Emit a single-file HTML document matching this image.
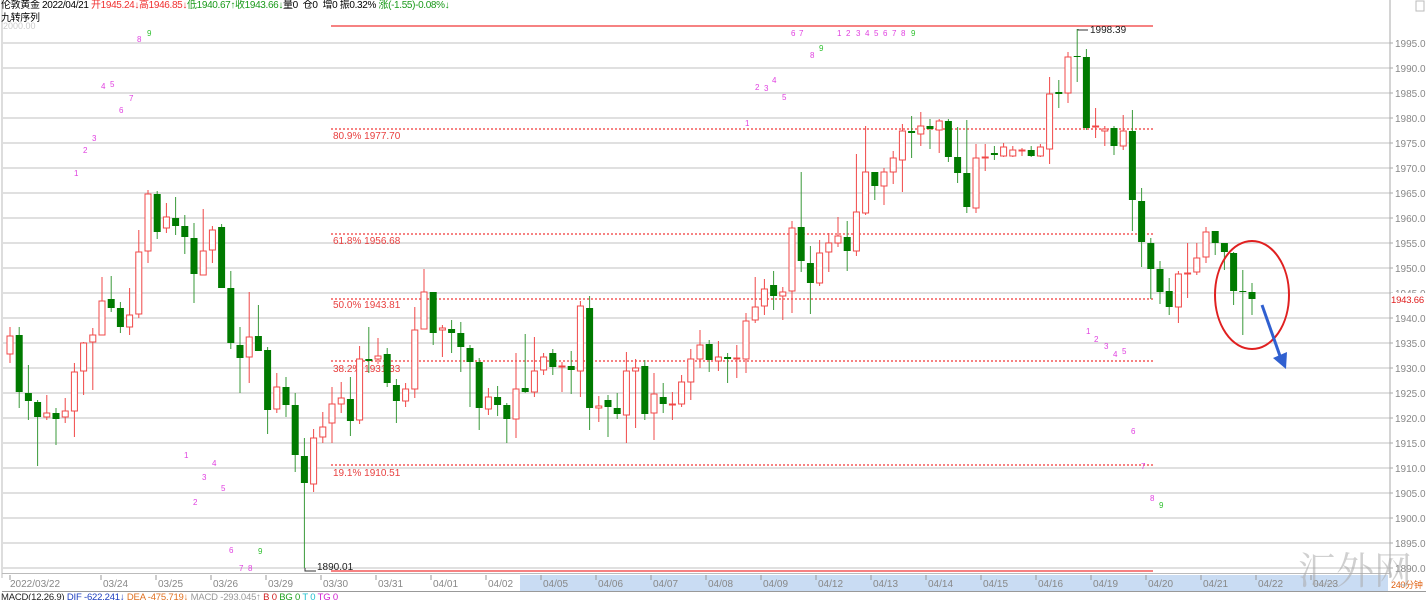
<!DOCTYPE html>
<html><head><meta charset="utf-8"><style>
body{margin:0;width:1426px;height:600px;overflow:hidden;background:#fff;font-family:"Liberation Sans","Noto Sans CJK SC",sans-serif}
svg{position:absolute;left:0;top:0}
.hd{position:absolute;left:1px;top:0;font-size:10px;letter-spacing:-0.35px;white-space:nowrap;color:#000;line-height:12.5px}
.r{color:#f03030}.g{color:#1a9a1a}
</style></head><body>
<svg width="1426" height="600" viewBox="0 0 1426 600" font-family="Liberation Sans, Noto Sans CJK SC, sans-serif">
<line x1="2" y1="0" x2="2" y2="578" stroke="#bbb"/>
<g stroke="#d6d6d6" stroke-width="1.5">
<path d="M3 43H1390M3 68H1390M3 93H1390M3 118H1390M3 143H1390M3 168H1390M3 193H1390M3 218H1390M3 243H1390M3 268H1390M3 293H1390M3 318H1390M3 343H1390M3 368H1390M3 393H1390M3 418H1390M3 443H1390M3 468H1390M3 493H1390M3 518H1390M3 543H1390M3 568H1390"/>
</g>
<line x1="1390" y1="0" x2="1390" y2="578" stroke="#aaa"/>
<g fill="#888" font-size="10">
<text x="1395" y="47">1995.00</text><text x="1395" y="72">1990.00</text><text x="1395" y="97">1985.00</text><text x="1395" y="122">1980.00</text><text x="1395" y="147">1975.00</text><text x="1395" y="172">1970.00</text><text x="1395" y="197">1965.00</text><text x="1395" y="222">1960.00</text><text x="1395" y="247">1955.00</text><text x="1395" y="272">1950.00</text><text x="1395" y="297">1945.00</text><text x="1395" y="322">1940.00</text><text x="1395" y="347">1935.00</text><text x="1395" y="372">1930.00</text><text x="1395" y="397">1925.00</text><text x="1395" y="422">1920.00</text><text x="1395" y="447">1915.00</text><text x="1395" y="472">1910.00</text><text x="1395" y="497">1905.00</text><text x="1395" y="522">1900.00</text><text x="1395" y="547">1895.00</text><text x="1395" y="572">1890.00</text>
</g>
<g stroke="#aaa"><path d="M1390 43h3M1390 68h3M1390 93h3M1390 118h3M1390 143h3M1390 168h3M1390 193h3M1390 218h3M1390 243h3M1390 268h3M1390 293h3M1390 318h3M1390 343h3M1390 368h3M1390 393h3M1390 418h3M1390 443h3M1390 468h3M1390 493h3M1390 518h3M1390 543h3M1390 568h3"/></g>
<rect x="1391" y="293" width="35" height="12" fill="#fff"/>
<text x="1391" y="303" fill="#e02020" font-size="9.5" letter-spacing="-0.2">1943.66</text>
<text x="3" y="29" fill="#ccc" font-size="9">2000.00</text>
<!-- fib lines -->
<g stroke="#f03838" stroke-width="1.2">
<path d="M331 26H1153M331 571H1153"/>
<path d="M331 129H1153M331 234H1153M331 299H1153M331 361H1153M331 465H1153" stroke-dasharray="2,2"/>
</g>
<g fill="#e84040" font-size="10">
<text x="333" y="139">80.9% 1977.70</text><text x="333" y="244">61.8% 1956.68</text><text x="333" y="308">50.0% 1943.81</text><text x="333" y="372">38.2% 1931.33</text><text x="333" y="476">19.1% 1910.51</text>
</g>
<path d="M1078 29V30H1088" stroke="#333" fill="none"/>
<text x="1090" y="33" font-size="10" fill="#222">1998.39</text>
<path d="M305 568V571H316" stroke="#333" fill="none"/>
<text x="317" y="570" font-size="10" fill="#222">1890.01</text>
<!-- candles -->
<path fill="none" stroke="#f04848" stroke-width="1" d="M10 327V363M46.8 395V420M65.2 398V423M74.4 363V437M83.6 342V395M92.8 328V390M102 277V335M129.6 288V335M138.8 230V318M148 190V263M166.4 203V233M203.2 209V275M212.4 226V263M249.2 292V383M276.8 373V413M313.6 429V492M322.8 412V443M332 387V443M341.2 382V413M359.6 346V424M378 338V364M405.6 383V407M414.8 307V398M424 269V329M442.4 325V357M488.4 388V415M516 353V438M534.4 337V397M543.6 353V375M562 362V392M580.4 301V397M598.8 396V422M626.4 352V443M635.6 359V428M654 373V440M672.4 392V420M681.6 375V407M690.8 349V400M700 330V368M718.4 341V371M736.8 345V378M746 313V373M755.2 277V323M764.4 279V315M782.8 287V320M792 221V313M819.6 240V286M828.8 233V272M838 217V247M856.4 154V256M865.6 126V215M884 168V205M893.2 151V184M902.4 124V192M920.8 112V146M939.2 119V153M976 144V213M985.2 144V171M1003.6 143V157M1012.8 146V157M1022 148V156M1040.4 144V157M1049.6 77V164M1068 52V103M1095.6 108V138M1104.8 126V146M1123.2 115V150M1178.4 271V323M1187.6 243V298M1196.8 243V275M1206 227V263"/>
<path fill="none" stroke="#3a9a3a" stroke-width="1" d="M19.2 327V408M28.4 365V420M37.6 400V466M56 408V445M111.2 276V312M120.4 302V333M157.2 191V239M175.6 197V235M184.8 215V254M194 223V303M221.6 224V288M230.8 271V349M240 327V393M258.4 305V351M267.6 347V434M286 377V417M295.2 393V472M304.4 438V568M350.4 377V436M368.8 327V373M387.2 348V387M396.4 379V423M433.2 292V345M451.6 320V353M460.8 322V372M470 345V407M479.2 358V430M497.6 386V416M506.8 403V443M525.2 334V393M552.8 349V375M571.2 351V394M589.6 296V430M608 395V437M617.2 393V419M644.8 360V420M663.2 383V413M709.2 340V372M727.6 353V383M773.6 271V310M801.2 172V272M810.4 246V314M847.2 221V271M874.8 172V200M911.6 116V158M930 119V149M948.4 119V162M957.6 127V183M966.8 120V213M994.4 146V160M1031.2 146V157M1058.8 80V108M1077.2 29V82M1086.4 49V130M1114 126V155M1132.4 110V231M1141.6 188V267M1150.8 238V299M1160 261V304M1169.2 278V315M1215.2 231V255M1224.4 243V270M1233.6 252V305M1242.8 270V335M1252 283V315"/>
<g fill="#fff" stroke="#f04848" stroke-width="1">
<rect x="7" y="336" width="6" height="18"/><rect x="43.8" y="413" width="6" height="4"/><rect x="62.2" y="411" width="6" height="6"/><rect x="71.4" y="372" width="6" height="39"/><rect x="80.6" y="343" width="6" height="28"/><rect x="89.8" y="335" width="6" height="7"/><rect x="99" y="301" width="6" height="34"/><rect x="126.6" y="315" width="6" height="12"/><rect x="135.8" y="252" width="6" height="62"/><rect x="145" y="194" width="6" height="57"/><rect x="163.4" y="217" width="6" height="11"/><rect x="200.2" y="251" width="6" height="24"/><rect x="209.4" y="230" width="6" height="20"/><rect x="246.2" y="337" width="6" height="20"/><rect x="273.8" y="387" width="6" height="22"/><rect x="310.6" y="438" width="6" height="46"/><rect x="319.8" y="427" width="6" height="10"/><rect x="329" y="404" width="6" height="19"/><rect x="338.2" y="398" width="6" height="6"/><rect x="356.6" y="359" width="6" height="61"/><rect x="375" y="356" width="6" height="3"/><rect x="402.6" y="389" width="6" height="12"/><rect x="411.8" y="330" width="6" height="59"/><rect x="421" y="292" width="6" height="37"/><rect x="439.4" y="328" width="6" height="2"/><rect x="485.4" y="397" width="6" height="12"/><rect x="513" y="389" width="6" height="30"/><rect x="531.4" y="371" width="6" height="21"/><rect x="540.6" y="357" width="6" height="13"/><rect x="559" y="366" width="6" height="1"/><rect x="577.4" y="306" width="6" height="65"/><rect x="595.8" y="406" width="6" height="2"/><rect x="623.4" y="371" width="6" height="44"/><rect x="632.6" y="368" width="6" height="3"/><rect x="651" y="394" width="6" height="19"/><rect x="669.4" y="404" width="6" height="1"/><rect x="678.6" y="382" width="6" height="22"/><rect x="687.8" y="359" width="6" height="23"/><rect x="697" y="345" width="6" height="14"/><rect x="715.4" y="357" width="6" height="4"/><rect x="733.8" y="358" width="6" height="1"/><rect x="743" y="321" width="6" height="38"/><rect x="752.2" y="307" width="6" height="13"/><rect x="761.4" y="289" width="6" height="17"/><rect x="779.8" y="292" width="6" height="4"/><rect x="789" y="228" width="6" height="63"/><rect x="816.6" y="253" width="6" height="30"/><rect x="825.8" y="243" width="6" height="9"/><rect x="835" y="236" width="6" height="7"/><rect x="853.4" y="212" width="6" height="39"/><rect x="862.6" y="172" width="6" height="41"/><rect x="881" y="172" width="6" height="14"/><rect x="890.2" y="158" width="6" height="14"/><rect x="899.4" y="131" width="6" height="29"/><rect x="917.8" y="126" width="6" height="8"/><rect x="936.2" y="121" width="6" height="9"/><rect x="973" y="158" width="6" height="50"/><rect x="982.2" y="157" width="6" height="1"/><rect x="1000.6" y="147" width="6" height="9"/><rect x="1009.8" y="150" width="6" height="6"/><rect x="1019" y="150" width="6" height="1"/><rect x="1037.4" y="147" width="6" height="9"/><rect x="1046.6" y="94" width="6" height="55"/><rect x="1065" y="57" width="6" height="36"/><rect x="1092.6" y="126" width="6" height="1"/><rect x="1101.8" y="129" width="6" height="2"/><rect x="1120.2" y="131" width="6" height="15"/><rect x="1175.4" y="274" width="6" height="33"/><rect x="1184.6" y="273" width="6" height="1"/><rect x="1193.8" y="258" width="6" height="14"/><rect x="1203" y="232" width="6" height="25"/>
</g>
<g fill="#007a00">
<rect x="15.7" y="335" width="7" height="57"/><rect x="24.9" y="393" width="7" height="8"/><rect x="34.1" y="402" width="7" height="15"/><rect x="52.5" y="413" width="7" height="6"/><rect x="107.7" y="299" width="7" height="9"/><rect x="116.9" y="308" width="7" height="19"/><rect x="153.7" y="194" width="7" height="38"/><rect x="172.1" y="218" width="7" height="8"/><rect x="181.3" y="226" width="7" height="11"/><rect x="190.5" y="238" width="7" height="36"/><rect x="218.1" y="227" width="7" height="61"/><rect x="227.3" y="288" width="7" height="55"/><rect x="236.5" y="345" width="7" height="13"/><rect x="254.9" y="336" width="7" height="15"/><rect x="264.1" y="350" width="7" height="60"/><rect x="282.5" y="387" width="7" height="18"/><rect x="291.7" y="405" width="7" height="50"/><rect x="300.9" y="456" width="7" height="27"/><rect x="346.9" y="399" width="7" height="22"/><rect x="365.3" y="359" width="7" height="2"/><rect x="383.7" y="354" width="7" height="29"/><rect x="392.9" y="385" width="7" height="16"/><rect x="429.7" y="292" width="7" height="41"/><rect x="448.1" y="329" width="7" height="4"/><rect x="457.3" y="333" width="7" height="14"/><rect x="466.5" y="348" width="7" height="14"/><rect x="475.7" y="362" width="7" height="46"/><rect x="494.1" y="397" width="7" height="8"/><rect x="503.3" y="405" width="7" height="14"/><rect x="521.7" y="388" width="7" height="4"/><rect x="549.3" y="353" width="7" height="14"/><rect x="567.7" y="366" width="7" height="4"/><rect x="586.1" y="308" width="7" height="100"/><rect x="604.5" y="400" width="7" height="7"/><rect x="613.7" y="408" width="7" height="6"/><rect x="641.3" y="366" width="7" height="48"/><rect x="659.7" y="397" width="7" height="7"/><rect x="705.7" y="344" width="7" height="16"/><rect x="724.1" y="357" width="7" height="2"/><rect x="770.1" y="285" width="7" height="11"/><rect x="797.7" y="227" width="7" height="34"/><rect x="806.9" y="263" width="7" height="20"/><rect x="843.7" y="237" width="7" height="14"/><rect x="871.3" y="172" width="7" height="14"/><rect x="908.1" y="131" width="7" height="2"/><rect x="926.5" y="126" width="7" height="3"/><rect x="944.9" y="121" width="7" height="36"/><rect x="954.1" y="157" width="7" height="16"/><rect x="963.3" y="173" width="7" height="34"/><rect x="990.9" y="153" width="7" height="2"/><rect x="1027.7" y="150" width="7" height="6"/><rect x="1055.3" y="92" width="7" height="2"/><rect x="1073.7" y="56" width="7" height="1"/><rect x="1082.9" y="57" width="7" height="71"/><rect x="1110.5" y="128" width="7" height="18"/><rect x="1128.9" y="131" width="7" height="69"/><rect x="1138.1" y="201" width="7" height="41"/><rect x="1147.3" y="243" width="7" height="26"/><rect x="1156.5" y="269" width="7" height="23"/><rect x="1165.7" y="291" width="7" height="16"/><rect x="1211.7" y="231" width="7" height="12"/><rect x="1220.9" y="243" width="7" height="9"/><rect x="1230.1" y="253" width="7" height="38"/><rect x="1239.3" y="291" width="7" height="1"/><rect x="1248.5" y="292" width="7" height="7"/>
</g>
<!-- nine-turn numbers -->
<g fill="#e040e0" font-size="8">
<text x="137" y="42">8</text><text x="101" y="89">4</text><text x="110" y="87">5</text><text x="129" y="101">7</text><text x="119" y="113">6</text><text x="92" y="141">3</text><text x="83" y="153">2</text><text x="74" y="176">1</text>
<text x="184" y="458">1</text><text x="212" y="466">4</text><text x="202" y="480">3</text><text x="221" y="491">5</text><text x="193" y="505">2</text><text x="229" y="553">6</text><text x="239" y="571">7</text><text x="248" y="571">8</text>
<text x="791" y="36">6</text><text x="799" y="36">7</text><text x="837" y="36">1</text><text x="846" y="36">2</text><text x="856" y="36">3</text><text x="865" y="36">4</text><text x="874" y="36">5</text><text x="883" y="36">6</text><text x="892" y="36">7</text><text x="901" y="36">8</text><text x="810" y="58">8</text>
<text x="755" y="90">2</text><text x="764" y="91">3</text><text x="772" y="83">4</text><text x="782" y="100">5</text><text x="745" y="126">1</text>
<text x="1086" y="334">1</text><text x="1094" y="342">2</text><text x="1104" y="349">3</text><text x="1113" y="357">4</text><text x="1122" y="354">5</text><text x="1131" y="434">6</text><text x="1141" y="469">7</text><text x="1150" y="501">8</text>
</g>
<g fill="#30c030" font-size="8">
<text x="147" y="36">9</text><text x="258" y="554">9</text><text x="911" y="36">9</text><text x="819" y="51">9</text><text x="1159" y="508">9</text>
</g>
<!-- annotations -->
<ellipse cx="1252" cy="295" rx="37" ry="54" fill="none" stroke="#e02020" stroke-width="2"/>
<line x1="1262" y1="305" x2="1280" y2="356" stroke="#3060d0" stroke-width="3"/>
<polygon points="1273,358 1286,369 1287,352" fill="#3060d0"/>
<!-- time axis -->
<line x1="2" y1="573.5" x2="1390" y2="573.5" stroke="#bbb"/>
<rect x="520" y="575" width="868" height="16" fill="#c9dcf3"/>
<line x1="2" y1="591.5" x2="1426" y2="591.5" stroke="#999"/>
<g fill="#888" font-size="10">
<text x="10" y="587">2022/03/22</text><text x="103" y="587">03/24</text><text x="158" y="587">03/25</text><text x="213" y="587">03/26</text><text x="268" y="587">03/29</text><text x="323" y="587">03/30</text><text x="378" y="587">03/31</text><text x="433" y="587">04/01</text><text x="488" y="587">04/02</text><text x="543" y="587">04/05</text><text x="598" y="587">04/06</text><text x="653" y="587">04/07</text><text x="708" y="587">04/08</text><text x="763" y="587">04/09</text><text x="818" y="587">04/12</text><text x="873" y="587">04/13</text><text x="928" y="587">04/14</text><text x="983" y="587">04/15</text><text x="1038" y="587">04/16</text><text x="1093" y="587">04/19</text><text x="1148" y="587">04/20</text><text x="1203" y="587">04/21</text><text x="1258" y="587">04/22</text><text x="1313" y="587">04/23</text>
</g>
<g stroke="#999"><path d="M10 575v5M101 575v5M156 575v5M211 575v5M266 575v5M321 575v5M376 575v5M431 575v5M486 575v5M541 575v5M596 575v5M651 575v5M706 575v5M761 575v5M816 575v5M871 575v5M926 575v5M981 575v5M1036 575v5M1091 575v5M1146 575v5M1201 575v5M1256 575v5M1311 575v5"/></g>
<text x="1391" y="588" fill="#e06010" font-size="9" letter-spacing="-0.3">240分钟</text>
<!-- watermark -->
<text x="1298" y="584" font-size="38" fill="#aaa" fill-opacity="0.55" font-family="Noto Serif CJK SC, serif">汇外网</text>
<text x="1" y="600" font-size="9.5" letter-spacing="-0.2"><tspan fill="#222">MACD(12,26,9)  </tspan><tspan fill="#2040c0">DIF -622.241↓ </tspan><tspan fill="#e07020">DEA -475.719↓ </tspan><tspan fill="#999">MACD -293.045↑ </tspan><tspan fill="#d02020">B 0 </tspan><tspan fill="#20a020">BG 0 </tspan><tspan fill="#20c0d0">T 0 </tspan><tspan fill="#d020d0">TG 0</tspan></text>
<rect x="1416" y="1" width="8" height="10" fill="none" stroke="#bbb"/>
</svg>
<div class="hd">伦敦黄金 2022/04/21 <span class="r">开1945.24↓高1946.85↓</span><span class="g">低1940.67↑收1943.66↓</span>量0 &nbsp;仓0 &nbsp;增0 振0.32% <span class="g">涨(-1.55)-0.08%↓</span><br>九转序列</div>
</body></html>
